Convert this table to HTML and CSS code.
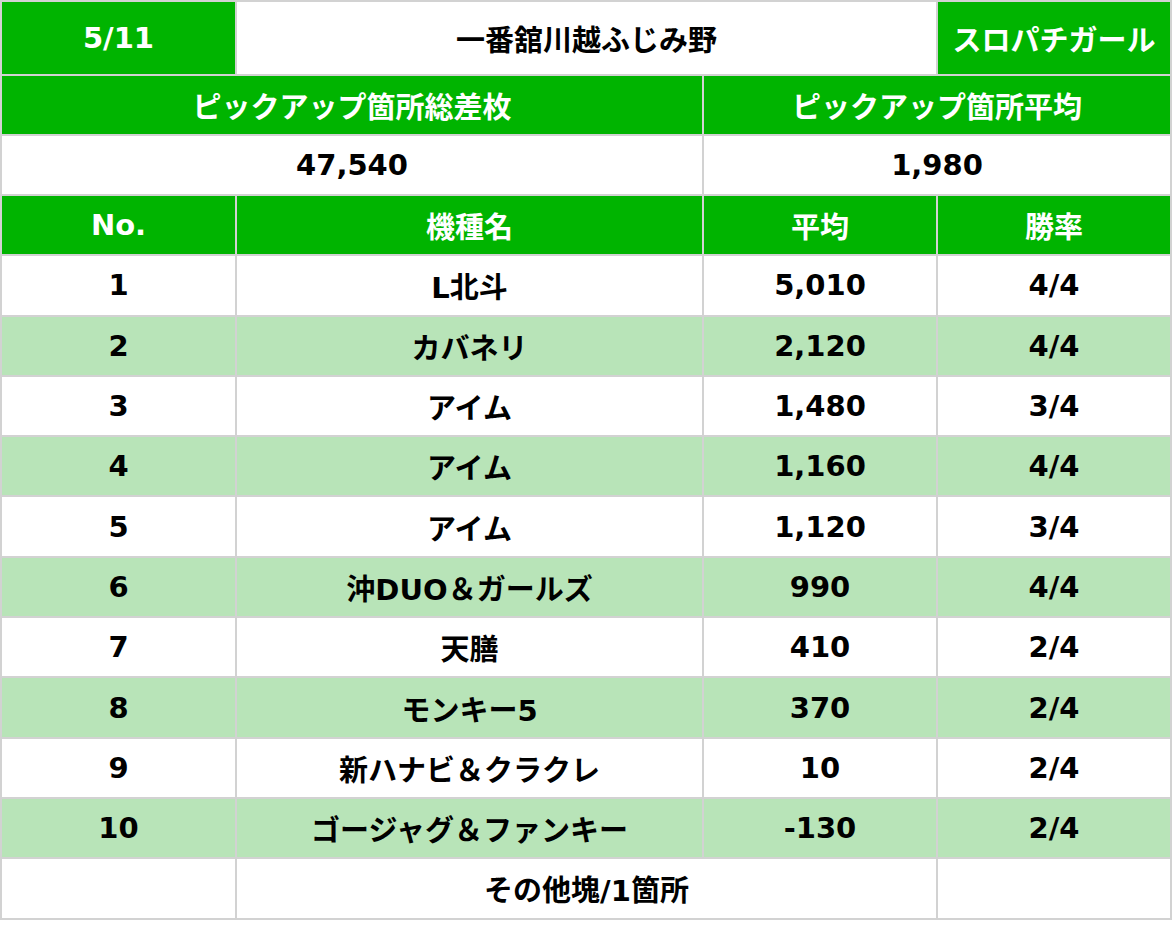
FILE: index.html
```html
<!DOCTYPE html>
<html lang="ja">
<head>
<meta charset="utf-8">
<link rel="stylesheet" href="styles.css">
</head>
<body>
<div class="sheet">
  <div class="cell g">5/11</div>
  <div class="cell span2">一番舘川越ふじみ野</div>
  <div class="cell g">スロパチガール</div>

  <div class="cell g span2">ピックアップ箇所総差枚</div>
  <div class="cell g span2">ピックアップ箇所平均</div>

  <div class="cell span2">47,540</div>
  <div class="cell span2">1,980</div>

  <div class="cell g">No.</div>
  <div class="cell g">機種名</div>
  <div class="cell g">平均</div>
  <div class="cell g">勝率</div>

  <div class="cell">1</div><div class="cell">L北斗</div><div class="cell">5,010</div><div class="cell">4/4</div>
  <div class="cell l">2</div><div class="cell l">カバネリ</div><div class="cell l">2,120</div><div class="cell l">4/4</div>
  <div class="cell">3</div><div class="cell">アイム</div><div class="cell">1,480</div><div class="cell">3/4</div>
  <div class="cell l">4</div><div class="cell l">アイム</div><div class="cell l">1,160</div><div class="cell l">4/4</div>
  <div class="cell">5</div><div class="cell">アイム</div><div class="cell">1,120</div><div class="cell">3/4</div>
  <div class="cell l">6</div><div class="cell l">沖DUO＆ガールズ</div><div class="cell l">990</div><div class="cell l">4/4</div>
  <div class="cell">7</div><div class="cell">天膳</div><div class="cell">410</div><div class="cell">2/4</div>
  <div class="cell l">8</div><div class="cell l">モンキー5</div><div class="cell l">370</div><div class="cell l">2/4</div>
  <div class="cell">9</div><div class="cell">新ハナビ＆クラクレ</div><div class="cell">10</div><div class="cell">2/4</div>
  <div class="cell l">10</div><div class="cell l">ゴージャグ＆ファンキー</div><div class="cell l">-130</div><div class="cell l">2/4</div>

  <div class="cell"></div>
  <div class="cell span2">その他塊/1箇所</div>
  <div class="cell"></div>
</div>
</body>
</html>
```

FILE: styles.css
```css
html, body {
  margin: 0;
  padding: 0;
  background: #ffffff;
}

.sheet {
  display: grid;
  grid-template-columns: 233px 465px 232px 232px;
  grid-template-rows: 72px 58px 58px;
  grid-auto-rows: 58.3px;
  gap: 2px;
  padding: 2px;
  width: 1168px;
  background: #d2d2d2;
  font-family: "DejaVu Sans", "Noto Sans CJK JP", sans-serif;
  font-weight: bold;
  font-size: 29px;
  color: #000000;
}

.cell {
  display: flex;
  align-items: center;
  justify-content: center;
  background: #ffffff;
  white-space: nowrap;
}

.span2 {
  grid-column: span 2;
}

.g {
  background: #00b400;
  color: #ffffff;
}

.l {
  background: #b8e4b8;
}
```
